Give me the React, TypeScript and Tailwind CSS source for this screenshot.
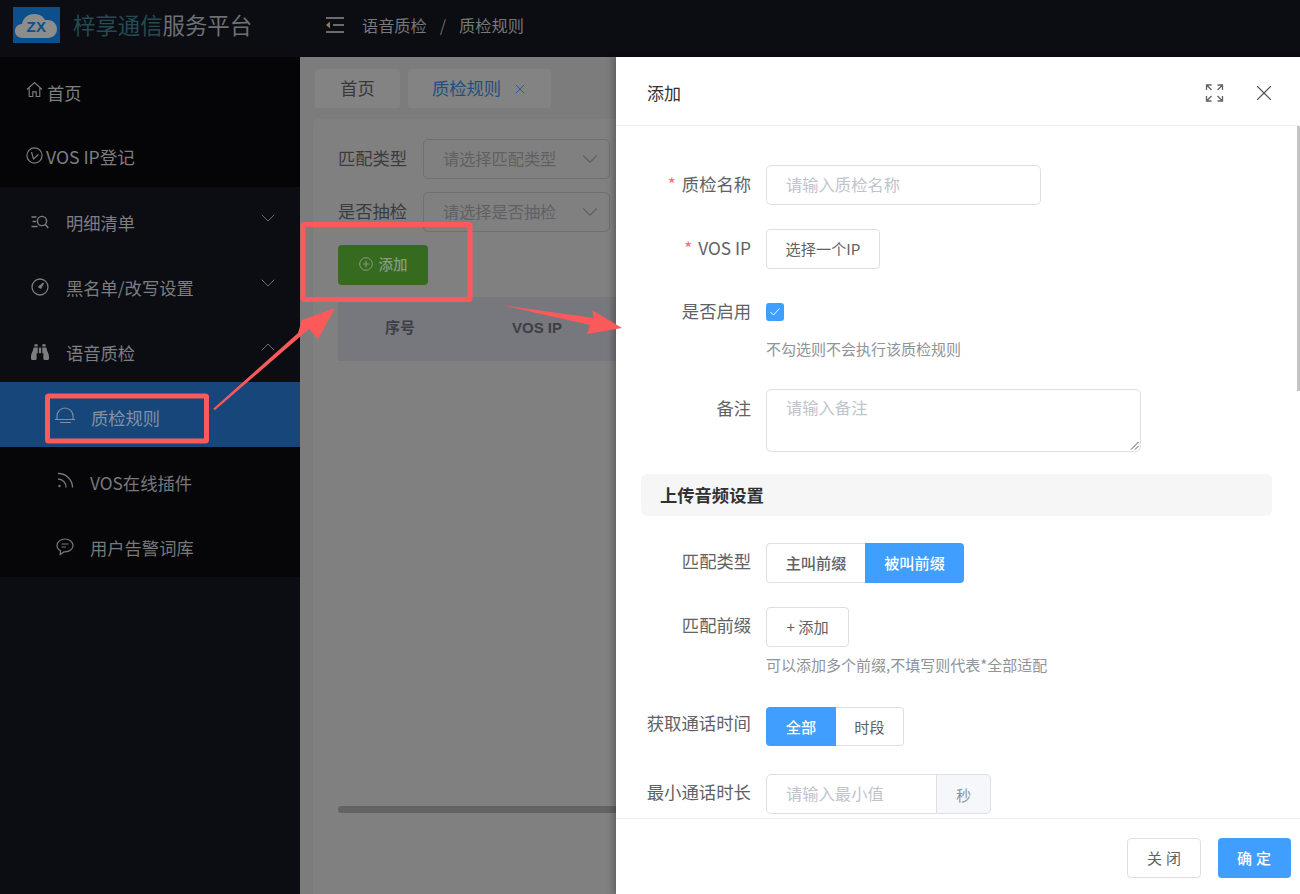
import React from "react";
import { ChevronDown, ChevronUp, X } from "lucide-react";
import { FaBinoculars } from "react-icons/fa";

function Logo() {
  return (
    <div className="relative w-[47px] h-[36px] bg-[#0b4f8c] flex items-center justify-center">
      <svg width="46" height="30" viewBox="0 0 46 30" className="absolute left-0 top-[3px]">
        <path d="M10 28c-5 0-8-3-8-7 0-4 3-7 7-7 1-6 6-10 12-10 5 0 9 2 11 6 1 0 2 0 3 0 5 0 9 4 9 9s-4 9-9 9z" fill="#8d8d8d" />
      </svg>
      <span className="relative text-[15px] leading-none font-bold text-[#0b4f8c] font-['Liberation_Sans',sans-serif] tracking-[0.5px] mt-[2px]">ZX</span>
    </div>
  );
}

function HomeIcon() {
  return (
    <svg width="17" height="17" viewBox="0 0 17 17" fill="none" stroke="#7d7d80" strokeWidth="1.1">
      <path d="M1 8.5 8.5 1.5 16 8.5M3.2 7v8.5h3.6v-4.6h3.4v4.6h3.6V7" />
    </svg>
  );
}

function VosIcon() {
  return (
    <svg width="17" height="17" viewBox="0 0 17 17" fill="none" stroke="#7d7d80" strokeWidth="1.2">
      <circle cx="8.5" cy="8.5" r="7.6" />
      <path d="M5.500 5 7.500 12 12.500 7.500" />
    </svg>
  );
}

function DetailIcon() {
  return (
    <svg width="18" height="14" viewBox="0 0 18 14" fill="none" stroke="#7d7d80" strokeWidth="1.4">
      <path d="M0.5 2h5M1.5 6.5h3.5M0.5 11.5h6" />
      <circle cx="11" cy="6" r="4.6" />
      <path d="m14.3 9.5 3 3.5" />
    </svg>
  );
}

function GaugeIcon() {
  return (
    <svg width="18" height="18" viewBox="0 0 18 18" fill="none" stroke="#7d7d80" strokeWidth="1.3">
      <circle cx="9" cy="9" r="8" />
      <path d="M12.5 5 9.8 10.2 7.8 9z" fill="#7d7d80" />
    </svg>
  );
}

function BellIcon() {
  return (
    <svg width="20" height="16" viewBox="0 0 20 16" fill="none" stroke="#8190a3" strokeWidth="1.1">
      <path d="M2 12V9a8 8 0 0 1 16 0v3M0 12.500h20M5 15.500h11" />
    </svg>
  );
}

function RssIcon() {
  return (
    <svg width="17" height="16" viewBox="0 0 17 16" fill="none" stroke="#78787a" strokeWidth="1.3">
      <path d="M1 7a8 8 0 0 1 8 8.500M1 1.500a14 14 0 0 1 14.500 14" />
      <circle cx="2.500" cy="14" r="1.200" fill="#78787a" stroke="none" />
    </svg>
  );
}

function ChatIcon() {
  return (
    <svg width="18" height="18" viewBox="0 0 18 18" fill="none" stroke="#78787a" strokeWidth="1.2">
      <path d="M9 1C4.600 1 1 3.800 1 7.500c0 2.300 1.400 4.200 3.500 5.300l-.3 3.700 3.700-2.600h1.100c4.400 0 8-2.900 8-6.400S13.400 1 9 1z" />
      <path d="M5.500 6h7M5.500 9h4.500" />
    </svg>
  );
}

function MenuItem({ icon, label, open, iconClass }: { icon: React.ReactNode; label: string; open: boolean; iconClass: string }) {
  return (
    <div className="h-[65px] flex items-center pt-[6px] pl-[31px] pr-[20px]">
      <div className={"w-[18px] flex justify-center " + iconClass}>{icon}</div>
      <span className="ml-[17px] text-[17.3px] text-[#7e7e80]">{label}</span>
      {open ? (
        <ChevronUp size={24} strokeWidth={1} className="ml-auto -mt-[11px] text-[#6a6a6c]" />
      ) : (
        <ChevronDown size={24} strokeWidth={1} className="ml-auto -mt-[9px] text-[#6a6a6c]" />
      )}
    </div>
  );
}

function Sidebar() {
  return (
    <aside className="w-[300px] shrink-0 bg-[#0b0d13]">
      <div className="bg-[#050507] h-[130px]">
        <div className="h-[65px] flex items-center pt-[6px] pl-[26px]">
          <div className="-mt-[7px]"><HomeIcon /></div>
          <span className="ml-[4px] text-[17.3px] text-[#7e7e80]">首页</span>
        </div>
        <div className="h-[65px] flex items-center pt-[6px] pl-[26px]">
          <div className="-mt-[5px]"><VosIcon /></div>
          <span className="ml-[3px] text-[17.6px] text-[#7e7e80]">VOS IP登记</span>
        </div>
      </div>
      <MenuItem icon={<DetailIcon />} label="明细清单" open={false} iconClass="-mt-[1px]" />
      <MenuItem icon={<GaugeIcon />} label="黑名单/改写设置" open={false} iconClass="-mt-[1px]" />
      <MenuItem icon={<FaBinoculars size={18} color="#7d7d80" />} label="语音质检" open={true} iconClass="-mt-[1px]" />
      <div className="bg-[#060608]">
        <div className="h-[65px] bg-[#17477a] flex items-center pt-[6px] pl-[55px]">
          <div className="-mt-[6px]"><BellIcon /></div>
          <span className="ml-[16px] text-[17.3px] text-[#8391a3]">质检规则</span>
        </div>
        <div className="h-[65px] flex items-center pt-[6px] pl-[57px]">
          <div className="-mt-[6px]"><RssIcon /></div>
          <span className="ml-[16px] text-[17.3px] text-[#78787a]">VOS在线插件</span>
        </div>
        <div className="h-[65px] flex items-center pt-[6px] pl-[56px]">
          <div className="-mt-[2px]"><ChatIcon /></div>
          <span className="ml-[16px] text-[17.3px] text-[#78787a]">用户告警词库</span>
        </div>
      </div>
    </aside>
  );
}

function FilterSelect({ label, placeholder }: { label: string; placeholder: string }) {
  return (
    <div className="flex items-center h-[40px]">
      <span className="w-[85px] pb-[3px] text-[17.3px] text-[#3b3c3e]">{label}</span>
      <div className="w-[187px] h-[40px] rounded-[5px] border border-[#6f7072] flex items-center pl-[19px] pr-[6px]">
        <span className="pb-[2px] text-[16.2px] text-[#5f6063]">{placeholder}</span>
        <ChevronDown size={26} strokeWidth={1} className="ml-auto text-[#5f6063]" />
      </div>
    </div>
  );
}

function MainArea() {
  return (
    <main className="flex-1 bg-[#7c7c7c] overflow-hidden pl-[13px]">
      <div className="flex gap-[8px] pt-[12px] pl-[2px]">
        <div className="w-[85px] h-[39px] pb-[2px] rounded-[3px] bg-[#838383] flex items-center justify-center text-[17.3px] text-[#39393b]">首页</div>
        <div className="w-[143px] h-[39px] pb-[2px] rounded-[3px] bg-[#838383] flex items-center pl-[24px] text-[17.3px] text-[#234f7e]">
          质检规则
          <X size={16} strokeWidth={1.4} className="ml-[11px] mt-[2px] text-[#2b5d94]" />
        </div>
      </div>
      <div className="mt-[11px] w-[1000px] h-[780px] rounded-tl-[5px] bg-[#808080] pl-[25px] pt-[20px]">
        <div className="flex flex-col gap-[13px]">
          <FilterSelect label="匹配类型" placeholder="请选择匹配类型" />
          <FilterSelect label="是否抽检" placeholder="请选择是否抽检" />
        </div>
        <div className="mt-[13px] w-[90px] h-[40px] pb-[2px] rounded-[4px] bg-[#356a1f] flex items-center justify-center gap-[6px] text-[14.500px] font-medium text-[#8a9b81]">
          <svg width="14" height="14" viewBox="0 0 14 14" fill="none" stroke="#8a9b81" strokeWidth="1">
            <circle cx="7" cy="7" r="6.300" />
            <path d="M7 3.800v6.400M3.800 7h6.400" />
          </svg>
          添加
        </div>
        <div className="mt-[12px] h-[64px] pb-[2px] bg-[#76787d] flex items-center text-[15px] font-bold text-[#3d3f45] font-['Liberation_Sans','Noto_Sans_CJK_SC',sans-serif]">
          <span className="w-[124px] text-center">序号</span>
          <span className="w-[150px] text-center">VOS IP</span>
        </div>
        <div className="mt-[445px] h-[7px] rounded-[3px] bg-[#636363]" />
      </div>
    </main>
  );
}

function FormRow({ label, required, className, labelClass = "pb-[3px]", children }: { label: string; required?: boolean; className: string; labelClass?: string; children: React.ReactNode }) {
  return (
    <div className={"flex items-start " + className}>
      <div className={"w-[135px] h-[40px] flex items-center justify-end text-[17.300px] text-[#606266] " + labelClass}>
        {required ? <span className="text-[#f56c6c] mr-[6px]">*</span> : null}
        {label}
      </div>
      <div className="ml-[15px]">{children}</div>
    </div>
  );
}

function OutlineButton({ className, children }: { className: string; children: React.ReactNode }) {
  return (
    <div className={"h-[40px] pb-[2px] border border-[#dcdfe6] bg-white flex items-center justify-center text-[15.200px] text-[#606266] " + className}>
      {children}
    </div>
  );
}

function Drawer() {
  return (
    <section className="absolute left-[616px] top-[57px] w-[684px] h-[837px] bg-white flex flex-col shadow-[-3px_0_6px_rgba(0,0,0,0.25)]">
      <div className="h-[69px] shrink-0 border-b border-[#eeeeee] flex items-center pl-[31px] pr-[23px]">
        <span className="text-[17px] text-[#303133] mt-[4px]">添加</span>
        <svg width="19" height="18" viewBox="0 0 18 18" fill="none" stroke="#606266" strokeWidth="1.300" className="ml-auto mr-[27px] mt-[3px]">
          <path d="M1 6V1h5M1 1l5 5M12 1h5v5M17 1l-5 5M1 12v5h5M1 17l5-5M17 12v5h-5M17 17l-5-5" />
        </svg>
        <X size={26} strokeWidth={1} className="mt-[4px] text-[#505255]" />
      </div>

      <div className="flex-1 min-h-0 flex overflow-hidden">
        <div className="flex-1 pt-[39px]">
          <FormRow label="质检名称" required className="">
            <div className="w-[275px] h-[40px] pb-[2px] rounded-[5px] border border-[#dcdfe6] flex items-center pl-[19px] text-[16.300px] text-[#c0c4cc]">请输入质检名称</div>
          </FormRow>
          <FormRow label="VOS IP" required className="mt-[24px]">
            <OutlineButton className="w-[114px] rounded-[4px]">选择一个IP</OutlineButton>
          </FormRow>
          <FormRow label="是否启用" className="mt-[23px]">
            <div className="h-[40px] flex items-center">
              <div className="w-[18px] h-[18px] rounded-[3px] bg-[#409eff] flex items-center justify-center">
                <svg width="12" height="10" viewBox="0 0 12 10" fill="none" stroke="#ffffff" strokeWidth="1">
                  <path d="m1.500 5 3 3 6-6.500" />
                </svg>
              </div>
            </div>
            <div className="mt-[5px] h-[24px] flex items-center text-[15px] text-[#909399]">不勾选则不会执行该质检规则</div>
          </FormRow>
          <FormRow label="备注" className="mt-[28px]">
            <div className="relative w-[375px] h-[63px] rounded-[5px] border border-[#dcdfe6] pl-[19px] pt-[5px] text-[16.300px] text-[#c0c4cc]">
              请输入备注
              <svg width="9" height="9" viewBox="0 0 9 9" fill="none" stroke="#505255" strokeWidth="1" className="absolute right-[1px] bottom-[1px]">
                <path d="M1 8.500 8.500 1M5 8.500 8.500 5" />
              </svg>
            </div>
          </FormRow>
          <div className="mt-[22px] ml-[25px] w-[631px] h-[42px] rounded-[6px] bg-[#f6f6f6] flex items-center pl-[19px] text-[17.300px] font-bold text-[#303133]">上传音频设置</div>
          <FormRow label="匹配类型" labelClass="pb-[5px]" className="mt-[27px]">
            <div className="flex">
              <OutlineButton className="w-[99px] rounded-l-[4px] border-r-0 font-medium">主叫前缀</OutlineButton>
              <div className="w-[99px] h-[40px] pb-[2px] rounded-r-[4px] bg-[#409eff] flex items-center justify-center text-[15.200px] font-medium text-white">被叫前缀</div>
            </div>
          </FormRow>
          <FormRow label="匹配前缀" labelClass="pb-[5px]" className="mt-[24px]">
            <OutlineButton className="w-[83px] rounded-[4px]">+ 添加</OutlineButton>
            <div className="mt-[6px] h-[24px] flex items-center text-[15px] text-[#909399]">可以添加多个前缀,不填写则代表*全部适配</div>
          </FormRow>
          <FormRow label="获取通话时间" labelClass="pb-[7px] !text-[17.4px]" className="mt-[30px]">
            <div className="flex">
              <div className="w-[70px] h-[39px] rounded-l-[4px] bg-[#409eff] flex items-center justify-center text-[15.200px] font-medium text-white">全部</div>
              <OutlineButton className="w-[68px] !h-[39px] !pb-0 rounded-r-[4px] border-l-0">时段</OutlineButton>
            </div>
          </FormRow>
          <FormRow label="最小通话时长" labelClass="pb-[3px] !text-[17.4px]" className="mt-[27px]">
            <div className="flex h-[40px] w-[225px]">
              <div className="w-[171px] pb-[2px] rounded-l-[5px] border border-[#dcdfe6] flex items-center pl-[19px] text-[16.300px] text-[#c0c4cc]">请输入最小值</div>
              <div className="w-[54px] rounded-r-[5px] border border-l-0 border-[#dcdfe6] bg-[#f5f7fa] flex items-center justify-center text-[15.200px] text-[#909399]">秒</div>
            </div>
          </FormRow>
        </div>
        <div className="w-[3px] shrink-0">
          <div className="h-[265px] bg-[#c4c4c4]" />
        </div>
      </div>

      <div className="h-[76px] shrink-0 border-t border-[#eeeeee] flex items-start justify-end gap-[17px] pt-[19px] pr-[9px]">
        <div className="w-[74px] h-[40px] pl-[4px] rounded-[4px] border border-[#dcdfe6] flex items-center justify-center text-[15px] tracking-[4px] text-[#606266]">关闭</div>
        <div className="w-[73px] h-[40px] pl-[3px] rounded-[4px] bg-[#409eff] flex items-center justify-center text-[15px] font-medium tracking-[4px] text-white">确定</div>
      </div>
    </section>
  );
}

function Annotations() {
  return (
    <svg width="1300" height="894" viewBox="0 0 1300 894" fill="none" className="absolute left-0 top-0 pointer-events-none">
      <rect x="47.500" y="396" width="159" height="45" rx="1" stroke="#fc5a5a" strokeWidth="5" />
      <rect x="303" y="224.500" width="167" height="75" rx="1" stroke="#fc5a5a" strokeWidth="5" />
      <polygon points="213,409 298,333 302,320 335,308 318,339 309,329 215,410" fill="#fc5a5a" />
      <polygon points="501,305 594,318 592,310 622,328 587,334 590,325" fill="#fc5a5a" />
    </svg>
  );
}

export default function App() {
  return (
    <div className="relative w-[1300px] h-[894px] overflow-hidden flex flex-col font-['Noto_Sans_CJK_SC','Noto_Sans',sans-serif]">
      <header className="h-[57px] shrink-0 bg-[#0b0d13] flex items-center">
        <div className="w-[300px] shrink-0 flex items-center pl-[13px] -mt-[7px]">
          <Logo />
          <span className="ml-[13px] text-[22.400px] text-[#264a54]">梓享通信<span className="text-[#6d7074]">服务平台</span></span>
        </div>
        <div className="flex items-center -mt-[7px] pl-[25px] text-[16.200px] text-[#77787a]">
          <svg width="19" height="16" viewBox="0 0 19 16" fill="none" stroke="#8a8a8a" strokeWidth="1.300">
            <path d="M1 1h18M8 8h11M1 15h18" />
            <path d="M5 4.500v7L1 8z" fill="#8a7d5c" stroke="none" />
          </svg>
          <span className="ml-[18px]">语音质检</span>
          <span className="mx-[13px] text-[#66676a]">/</span>
          <span>质检规则</span>
        </div>
      </header>
      <div className="flex-1 min-h-0 flex">
        <Sidebar />
        <MainArea />
      </div>
      <Drawer />
      <Annotations />
    </div>
  );
}
